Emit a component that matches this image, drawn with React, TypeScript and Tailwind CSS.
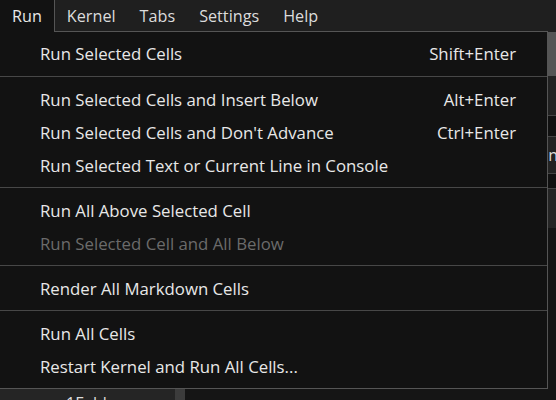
import React from 'react'

type Item = { label: string; shortcut?: string; disabled?: boolean }

const SECTIONS: Item[][] = [
  [{ label: 'Run Selected Cells', shortcut: 'Shift+Enter' }],
  [
    { label: 'Run Selected Cells and Insert Below', shortcut: 'Alt+Enter' },
    { label: "Run Selected Cells and Don't Advance", shortcut: 'Ctrl+Enter' },
    { label: 'Run Selected Text or Current Line in Console' },
  ],
  [
    { label: 'Run All Above Selected Cell' },
    { label: 'Run Selected Cell and All Below', disabled: true },
  ],
  [{ label: 'Render All Markdown Cells' }],
  [{ label: 'Run All Cells' }, { label: 'Restart Kernel and Run All Cells...' }],
]

const MENUS = ['Kernel', 'Tabs', 'Settings', 'Help']

export default function App() {
  return (
    <div
      className="relative w-[556px] h-[400px] overflow-hidden bg-[#131313] text-[#e8e8e8] text-[16px]"
      style={{ fontFamily: '"Open Sans", "Noto Sans", sans-serif' }}
    >
      {/* menubar */}
      <div className="flex h-[32px] bg-[#1f1f1f] leading-[32px] text-[16.2px]">
        <div className="relative z-20 h-[32px] px-3 bg-[#121212] border-r border-[#555]">Run</div>
        {MENUS.map(m => (
          <div key={m} className="px-3 text-[#dcdcdc]">{m}</div>
        ))}
      </div>

      {/* app content behind the menu */}
      <div className="flex h-[368px]">
        <div className="flex flex-col w-[175px]">
          <div className="h-[356px] shrink-0" />
          <div className="flex-1 min-h-0 overflow-hidden bg-[#252525] pl-[66px] pt-[5px] leading-[20px] text-[#ddd]">1Folder</div>
        </div>
        <div className="flex flex-col w-[10px]">
          <div className="h-[356px] shrink-0" />
          <div className="flex-1 bg-[#3c3c3c]" />
        </div>
        <div className="flex-1 flex flex-col">
          <div className="h-[44px] bg-[#555]" />
          <div className="h-[39px] bg-[#222]" />
          <div className="h-[21px] bg-[#111] border-t border-[#444]" />
          <div className="h-[37px] bg-[#232323] border-t border-[#444] flex justify-end items-center text-[#ddd] overflow-hidden">
            <span className="-mr-[2px]">in</span>
          </div>
          <div className="h-[15px] bg-[#111] border-t border-[#444]" />
          <div className="h-[40px] bg-[#252525] border-t border-[#444]" />
          <div className="flex-1 bg-[#151515]" />
        </div>
      </div>

      {/* dropdown */}
      <div className="absolute left-0 top-[31px] z-10 w-[548px] bg-[#121212] border border-l-0 border-[#555] text-[16.8px]">
        {SECTIONS.map((section, i) => (
          <div
            key={i}
            className={i === 0 ? 'pt-[5px] pb-[6px]' : 'pt-[6px] pb-[5px] border-t border-[#474747]'}
          >
            {section.map(item => (
              <div
                key={item.label}
                className={`flex items-center justify-between h-[33px] pl-[40px] pr-[31px] ${
                  item.disabled ? 'text-[#6b6b6b]' : 'text-[#e8e8e8]'
                }`}
              >
                <span>{item.label}</span>
                {item.shortcut && <span>{item.shortcut}</span>}
              </div>
            ))}
          </div>
        ))}
      </div>
    </div>
  )
}
